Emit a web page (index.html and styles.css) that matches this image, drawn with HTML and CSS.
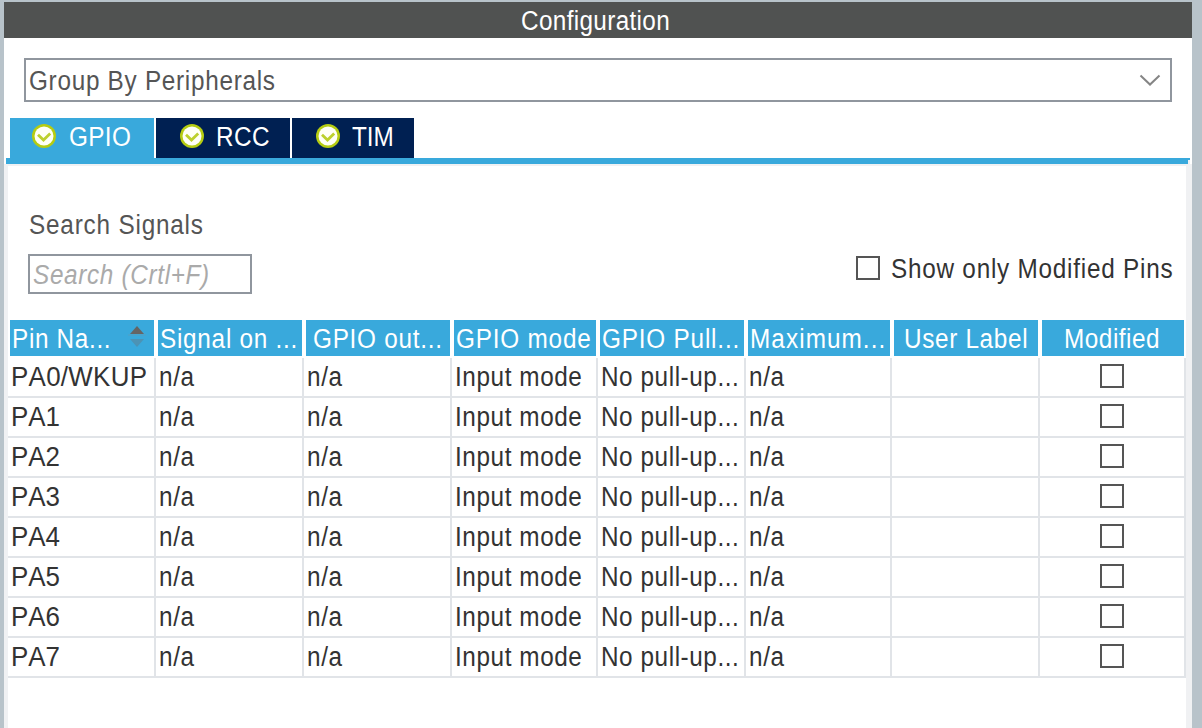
FILE: index.html
```html
<!DOCTYPE html>
<html lang="en">
<head>
<meta charset="utf-8">
<title>Configuration</title>
<link rel="stylesheet" href="styles.css">
</head>
<body>
<svg width="0" height="0" class="defs">
  <symbol id="ok" viewBox="0 0 24 24">
    <circle cx="12" cy="12" r="12" fill="#b5cc12"/>
    <circle cx="12" cy="12" r="9.5" fill="#fffff6"/>
    <path d="M6 10.8l5.5 5.2 6.7-6.5" fill="none" stroke="#bdd02c" stroke-width="2.8"/>
  </symbol>
</svg>
<main class="panel">
  <header class="title"><span class="t-title">Configuration</span></header>
  <div class="select"><span class="t-select">Group By Peripherals</span>
    <svg class="chevron" width="22" height="14" viewBox="0 0 22 14"><path d="M1.5 2.5l9.5 9 9.5-9" fill="none" stroke="#858585" stroke-width="2"/></svg>
  </div>
  <nav class="tabs">
    <div class="tab tab-gpio active"><svg class="ok"><use href="#ok"/></svg><span class="t-gpio">GPIO</span></div>
    <div class="tab tab-rcc"><svg class="ok"><use href="#ok"/></svg><span class="t-rcc">RCC</span></div>
    <div class="tab tab-tim"><svg class="ok"><use href="#ok"/></svg><span class="t-tim">TIM</span></div>
  </nav>
  <div class="rule"></div>
  <section class="content">
    <div class="filters">
      <div class="search">
        <span class="label t-label">Search Signals</span>
        <div class="field"><span class="t-field">Search (Crtl+F)</span></div>
      </div>
      <div class="only"><i class="box"></i><span class="t-only">Show only Modified Pins</span></div>
    </div>
    <div class="row head">
      <div><span class="h1">Pin Na...</span><svg class="sort" width="18" height="24" viewBox="0 0 18 24"><path d="M9 1l7 8H2z" fill="#656565"/><path d="M0 10h18" stroke="#55a0c2"/><path d="M2 14h14l-7 8z" fill="#4c93b5"/></svg></div>
      <div><span class="h2">Signal on ...</span></div>
      <div><span class="h3">GPIO out...</span></div>
      <div><span class="h4">GPIO mode</span></div>
      <div><span class="h5">GPIO Pull...</span></div>
      <div><span class="h6">Maximum...</span></div>
      <div><span class="h7">User Label</span></div>
      <div><span class="h8">Modified</span></div>
    </div>
    <div class="row"><div><span class="pin0">PA0/WKUP</span></div><div><span>n/a</span></div><div><span>n/a</span></div><div><span class="mode">Input mode</span></div><div><span class="pull">No pull-up...</span></div><div><span>n/a</span></div><div></div><div><i class="box"></i></div></div>
    <div class="row"><div><span class="pin">PA1</span></div><div><span>n/a</span></div><div><span>n/a</span></div><div><span class="mode">Input mode</span></div><div><span class="pull">No pull-up...</span></div><div><span>n/a</span></div><div></div><div><i class="box"></i></div></div>
    <div class="row"><div><span class="pin">PA2</span></div><div><span>n/a</span></div><div><span>n/a</span></div><div><span class="mode">Input mode</span></div><div><span class="pull">No pull-up...</span></div><div><span>n/a</span></div><div></div><div><i class="box"></i></div></div>
    <div class="row"><div><span class="pin">PA3</span></div><div><span>n/a</span></div><div><span>n/a</span></div><div><span class="mode">Input mode</span></div><div><span class="pull">No pull-up...</span></div><div><span>n/a</span></div><div></div><div><i class="box"></i></div></div>
    <div class="row"><div><span class="pin">PA4</span></div><div><span>n/a</span></div><div><span>n/a</span></div><div><span class="mode">Input mode</span></div><div><span class="pull">No pull-up...</span></div><div><span>n/a</span></div><div></div><div><i class="box"></i></div></div>
    <div class="row"><div><span class="pin">PA5</span></div><div><span>n/a</span></div><div><span>n/a</span></div><div><span class="mode">Input mode</span></div><div><span class="pull">No pull-up...</span></div><div><span>n/a</span></div><div></div><div><i class="box"></i></div></div>
    <div class="row"><div><span class="pin">PA6</span></div><div><span>n/a</span></div><div><span>n/a</span></div><div><span class="mode">Input mode</span></div><div><span class="pull">No pull-up...</span></div><div><span>n/a</span></div><div></div><div><i class="box"></i></div></div>
    <div class="row"><div><span class="pin">PA7</span></div><div><span>n/a</span></div><div><span>n/a</span></div><div><span class="mode">Input mode</span></div><div><span class="pull">No pull-up...</span></div><div><span>n/a</span></div><div></div><div><i class="box"></i></div></div>
  </section>
</main>
</body>
</html>
```
FILE: styles.css
```css
* { box-sizing: border-box; }
body {
  margin: 0;
  height: 728px;
  padding: 2px 10px 0 4px;
  overflow: hidden;
  background: #b8c3ca;
  font: 27px/30px "Liberation Sans", Arial, sans-serif;
  font-kerning: none;
  font-variant-ligatures: none;
  color: #333;
}
.defs { position: absolute; }
span { display: block; white-space: nowrap; padding-top: 1px; flex: none; transform: scaleX(.9); transform-origin: 0 0; letter-spacing: .7px; }
.panel { height: 726px; background: #fff; display: flex; flex-direction: column; }
.title { height: 36px; background: #505251; color: #fff; display: flex; padding-left: 517px; align-items: center; }
.select {
  height: 44px; margin: 20px 20px 0; border: 2px solid #90969e; color: #555;
  display: flex; align-items: center; justify-content: space-between; padding: 0 9px 0 3px;
}
.tabs { display: flex; gap: 2px; height: 40px; margin: 16px 0 0 6px; }
.tab { display: flex; align-items: center; background: #002052; color: #fff; }
.tab span { padding: 0 0 2px; }
.active { background: #39a9dc; }
.tab-gpio { width: 144px; padding-left: 22px; gap: 13px; }
.tab-rcc { width: 134px; padding-left: 24px; gap: 12px; }
.tab-tim { width: 122px; padding-left: 24px; gap: 12px; }
.ok { width: 24px; height: 24px; margin-top: -4px; }
.rule {
  height: 6px; margin: 0 2px 0 2px;
  background: linear-gradient(#39a9dc, #39a9dc) 0 0 / 100% 2px no-repeat, linear-gradient(90deg, #39a9dc calc(100% - 2px), #f0f1f3 calc(100% - 2px));
}
.content { flex: 1; border: solid #f0f1f3; border-width: 2px 6px 0 4px; }
.filters { display: flex; justify-content: space-between; height: 154px; padding: 43px 12px 0 20px; }
.label { color: #555; }
.search .label { padding: 1px 0; margin-left: 1px; }
.field { width: 224px; height: 40px; margin-top: 13px; border: 2px solid #90969e; display: flex; align-items: center; padding-left: 3px; color: #aaa; font-style: italic; }
.only { display: flex; align-items: center; gap: 11px; width: 318px; height: 32px; margin-top: 43px; }
.box { display: block; width: 24px; height: 24px; flex: none; border: 2px solid #555; background: #fff; }
.row { display: grid; grid-template-columns: 148px 148px 148px 146px 148px 146px 148px 146px; height: 40px; }
.row > div { border: solid #e1e4e8; border-width: 0 2px 2px 0; padding-left: 3px; display: flex; align-items: center; }
.row:not(.head) span { padding: 0 0 1px; }
.row > div:last-child { justify-content: center; padding: 0 0 2px; }
.head { height: 38px; color: #fff; }
.row.head > div { background: #39a9dc; border: solid #fff; border-width: 0 2px 2px; padding: 0 1px 0 2px; justify-content: flex-start; }
.row.head .h3 { margin-left: 5px; }
.row.head .h7 { margin-left: 8px; }
.row.head .h8 { margin-left: 20px; }
.sort { margin: -2px 7px 0 auto; flex: none; }
.t-title { letter-spacing: .39px; }
.t-select { letter-spacing: .8px; }
.t-gpio { letter-spacing: .4px; }
.t-rcc { letter-spacing: .5px; }
.t-tim { letter-spacing: 0; }
.t-label { letter-spacing: .9px; }
.t-field { letter-spacing: .75px; }
.t-only { letter-spacing: .85px; }
.h1 { letter-spacing: .75px; }
.h2 { letter-spacing: .83px; }
.h3 { letter-spacing: .83px; }
.h4 { letter-spacing: .9px; }
.h5 { letter-spacing: .9px; }
.h6 { letter-spacing: 1.2px; }
.h7 { letter-spacing: .75px; }
.h8 { letter-spacing: .6px; }
.pin0, .pin { transform: scaleX(.96); letter-spacing: 0; }
.pin0 { letter-spacing: .3px; }
.mode { letter-spacing: .65px; }
.pull { letter-spacing: .63px; }
```
